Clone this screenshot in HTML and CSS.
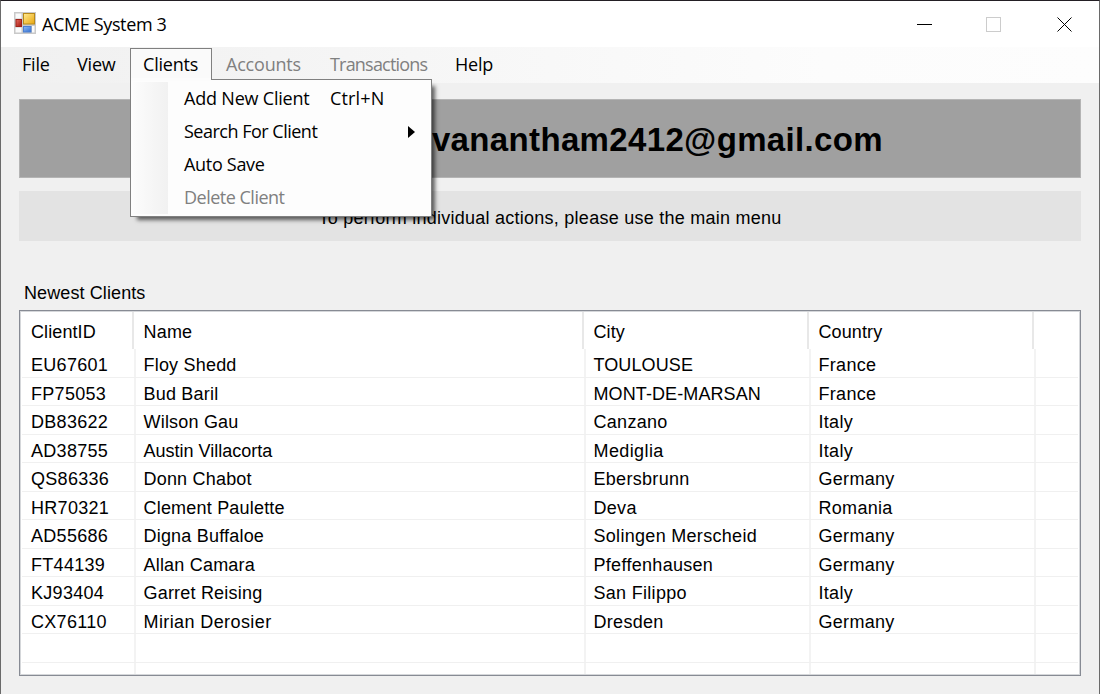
FILE: index.html
```html
<!DOCTYPE html>
<html lang="en">
<head>
<meta charset="utf-8">
<title>ACME System 3</title>
<link rel="stylesheet" href="styles.css">
</head>
<body>
<div class="window">
  <header class="titlebar">
    <svg class="app-icon" width="22" height="22" viewBox="0 0 22 22">
      <defs>
        <linearGradient id="gold" x2="1" y2="1"><stop stop-color="#ffe88c"/><stop offset="1" stop-color="#e9a913"/></linearGradient>
        <linearGradient id="red" x2="1" y2="1"><stop stop-color="#e0655a"/><stop offset="1" stop-color="#a81d13"/></linearGradient>
        <linearGradient id="blue" x2="1" y2="1"><stop stop-color="#86b4f6"/><stop offset="1" stop-color="#3a74d0"/></linearGradient>
      </defs>
      <rect width="22" height="22" fill="#c9c9c9"/>
      <path d="M1.500 1.500h6v5h-6zM1.500 15.500h6v5h-6zM18 14h2.500v6.500h-2.500z" fill="#fafafa"/>
      <rect x="9" y="1" width="12" height="11.500" fill="#b88a1a"/>
      <rect x="10" y="2" width="10" height="9.500" fill="url(#gold)"/>
      <rect x="1.500" y="7" width="6.500" height="8" fill="#9f2219"/>
      <rect x="2.500" y="8" width="4.500" height="6" fill="url(#red)"/>
      <rect x="9" y="14" width="8.500" height="6.500" fill="#4b7fd1"/>
      <rect x="10" y="15" width="6.500" height="4.500" fill="url(#blue)"/>
    </svg>
    <span class="title">ACME System 3</span>
    <div class="controls">
      <svg width="180" height="22" viewBox="0 0 180 22" fill="none" shape-rendering="crispEdges">
        <path d="M0 10.500h15" stroke="#000"/>
        <rect x="69.500" y="3.500" width="14" height="14" stroke="#ccc"/>
        <path d="M140.500 3.500l14 14M154.500 3.500l-14 14" stroke="#000" shape-rendering="auto"/>
      </svg>
    </div>
  </header>
  <nav class="menubar">
    <span class="item file">File</span>
    <span class="item view">View</span>
    <div class="item clients">
      <span>Clients</span>
      <div class="dropdown">
        <div class="entry"><span class="add">Add New Client</span><span class="shortcut">Ctrl+N</span></div>
        <div class="entry"><span class="search">Search For Client</span><svg class="arrow" width="7" height="12" viewBox="0 0 7 12"><path d="M0 0l7 6-7 6z" fill="#000"/></svg></div>
        <div class="entry"><span class="auto">Auto Save</span></div>
        <div class="entry disabled"><span class="delete">Delete Client</span></div>
      </div>
    </div>
    <span class="item accounts disabled">Accounts</span>
    <span class="item transactions disabled">Transactions</span>
    <span class="item help">Help</span>
  </nav>
  <main class="content">
    <h1 class="banner">vanantham2412@gmail.com</h1>
    <p class="hint">To perform individual actions, please use the main menu</p>
    <h2 class="label">Newest Clients</h2>
    <div class="list">
      <div class="row head"><span>ClientID</span><span>Name</span><span>City</span><span>Country</span></div>
      <div class="row"><span>EU67601</span><span>Floy Shedd</span><span class="caps">TOULOUSE</span><span>France</span></div>
      <div class="row"><span>FP75053</span><span>Bud Baril</span><span class="caps">MONT-DE-MARSAN</span><span>France</span></div>
      <div class="row"><span>DB83622</span><span>Wilson Gau</span><span>Canzano</span><span>Italy</span></div>
      <div class="row"><span>AD38755</span><span class="tight">Austin Villacorta</span><span class="wide">Mediglia</span><span>Italy</span></div>
      <div class="row"><span>QS86336</span><span>Donn Chabot</span><span>Ebersbrunn</span><span>Germany</span></div>
      <div class="row"><span>HR70321</span><span>Clement Paulette</span><span>Deva</span><span>Romania</span></div>
      <div class="row"><span>AD55686</span><span>Digna Buffaloe</span><span>Solingen Merscheid</span><span>Germany</span></div>
      <div class="row"><span>FT44139</span><span>Allan Camara</span><span>Pfeffenhausen</span><span>Germany</span></div>
      <div class="row"><span>KJ93404</span><span>Garret Reising</span><span>San Filippo</span><span>Italy</span></div>
      <div class="row"><span>CX76110</span><span class="wide">Mirian Derosier</span><span>Dresden</span><span>Germany</span></div>
      <div class="row"><span></span><span></span><span></span><span></span></div>
      <div class="row last"><span></span><span></span><span></span><span></span></div>
    </div>
  </main>
</div>
</body>
</html>
```

FILE: styles.css
```css
* { box-sizing: border-box; }
body { margin: 0; overflow: hidden; color: #000; font: 18px "Liberation Sans", Arial, sans-serif; }
.window {
  width: 1100px; height: 694px; background: #f0f0f0;
  border: 1px solid #6a6a6a; border-top-color: #231f24; border-bottom: 0;
}
.titlebar {
  height: 46px; background: #fff; display: flex; align-items: center;
  padding-left: 13px; font-family: "Open Sans", sans-serif; font-size: 18px;
}
.app-icon { display: block; margin-top: -2px; }
.title { margin-left: 6px; letter-spacing: -.37px; white-space: nowrap; }
.controls { margin-left: auto; width: 182px; height: 22px; }
.controls svg { display: block; margin-top: 1px; }
.menubar {
  height: 36px; display: flex; font-family: "Open Sans", sans-serif; font-size: 18px; line-height: 34px;
  background: linear-gradient(90deg, #f0f0f0, #fcfcfc 75%, #fdfdfd); letter-spacing: -.2px;
}
.item { white-space: nowrap; flex: none; }
.file { width: 55px; margin-left: 21px; }
.view { width: 53px; }
.clients {
  position: relative; width: 82px; height: 34px; margin: 1px 0 0; padding-left: 12px; line-height: 31px;
  border: 1px solid #808080; border-bottom: 0; background: #fafafa;
}
.accounts { width: 104px; margin-left: 14px; }
.transactions { width: 125px; letter-spacing: -.8px; }
.disabled { color: #808080; }
.dropdown {
  position: absolute; left: -1px; top: 30px; z-index: 2; width: 302px; height: 138px;
  padding: 2px 0 2px 1px; border: 1px solid #808080;
  background: linear-gradient(90deg, #fcfcfc, #f1f1f1) 2px 2px / 35px 132px no-repeat, #fdfdfd;
  box-shadow: 5px 5px 4px -2px rgba(0,0,0,.6);
}
.clients::after {
  content: ""; position: absolute; z-index: 3; left: 0; top: 29px; width: 80px; height: 3px; background: #fcfcfc;
}
.entry { display: flex; align-items: center; height: 33px; padding-left: 52px; }
.entry .add { width: 146px; }
.shortcut { letter-spacing: .15px; }
.search, .delete { letter-spacing: -.5px; }
.auto { letter-spacing: -.3px; }
.arrow { margin-left: auto; margin-right: 16px; }
.content { padding: 16px 18px 0; }
.banner {
  margin: 0; height: 79px; padding-right: 197px; background: #a0a0a0; text-align: right;
  font-size: 33px; line-height: 79px; letter-spacing: .35px; border: 1px solid #b4b4b4;
}
.hint { margin: 13px 0 0; height: 50px; background: #e3e3e3; text-align: center; line-height: 54px; letter-spacing: .25px; }
.label { margin: 40px 0 0 5px; height: 29px; font-size: 18px; line-height: 24px; font-weight: 400; letter-spacing: .1px; }
.list {
  height: 366px; padding: 1px 2px 0; overflow: hidden; background: #fff; letter-spacing: .3px;
  border: 1px solid #878b94; box-shadow: inset 0 0 0 1px #d5d7da;
}
.row {
  display: grid; grid-template-columns: 114px 450px 225px 225px; grid-template-rows: 100%;
  height: 28.500px; line-height: 32px; border-bottom: 1.500px solid #f0f0f0;
}
.row span { padding-left: 7.500px; border-right: 2px solid #f3f3f3; white-space: nowrap; }
.row span:first-child { padding-left: 9px; }
.row span:nth-child(2) { letter-spacing: .2px; }
.row.head { grid-template-columns: 112px 450px 225px 225px; height: 37px; border: 0; line-height: 41px; letter-spacing: .1px; }
.row.head span { padding-left: 9.500px; border-color: #e8e8e8; }
.row.head span:first-child { padding-left: 9px; }
.row .caps { letter-spacing: .1px; }
.row span.tight { letter-spacing: 0; }
.row span.wide { letter-spacing: .4px; }
.last { height: 11px; border: 0; }
```
